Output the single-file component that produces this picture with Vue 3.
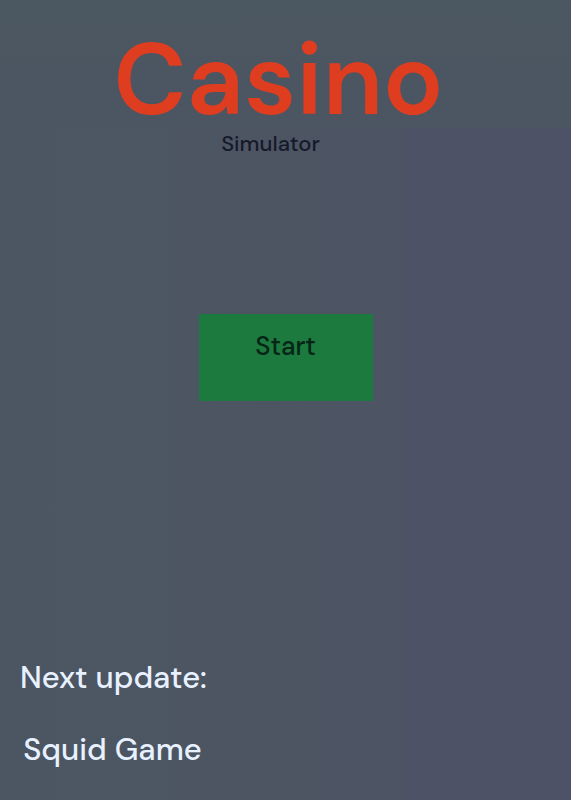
<template>
  <main class="home">
    <header class="title">
      <h1>Casino</h1>
      <p>Simulator</p>
    </header>

    <button type="button" class="start" @click="started = true">Start</button>

    <section class="news">
      <h2>Next update:</h2>
      <p>{{ nextUpdate }}</p>
    </section>
  </main>
</template>

<script setup>
import { ref } from 'vue';

const started = ref(false);
const nextUpdate = ref('Squid Game');
</script>

<style>
body {
  margin: 0;
}
</style>

<style scoped>
.home {
  display: flex;
  flex-direction: column;
  align-items: center;
  box-sizing: border-box;
  min-height: 100vh;
  padding: 28px 20px 14px;
  background:
    linear-gradient(#4b5761, #4c5562) top / 100% 128px no-repeat,
    linear-gradient(to right, #4c5662, #4d5463 70%, #4d5266 71%);
  font-family: "DM Sans", Inter, "Liberation Sans", sans-serif;
  font-weight: 500;
}

h1,
h2,
p {
  margin: 0;
  font-weight: 500;
}

.title {
  padding-right: 14px;
  text-align: center;
}

.title h1 {
  color: #df3d20;
  font-size: 100px;
  font-weight: 600;
  line-height: 104px;
}

.title p {
  padding-right: 16px;
  color: #151a2b;
  font-size: 22px;
  line-height: 24px;
}

.start {
  width: 174px;
  height: 87px;
  margin-top: 158px;
  padding: 0 0 24px;
  border: 0;
  background: #1c7a3e;
  color: #052516;
  font: inherit;
  font-size: 26px;
  cursor: pointer;
}

.news {
  align-self: flex-start;
  margin-top: auto;
  color: #e8f1ff;
  text-align: center;
}

.news h2,
.news p {
  font-size: 31px;
  line-height: 72px;
}

.news p {
  padding-right: 2px;
}
</style>
